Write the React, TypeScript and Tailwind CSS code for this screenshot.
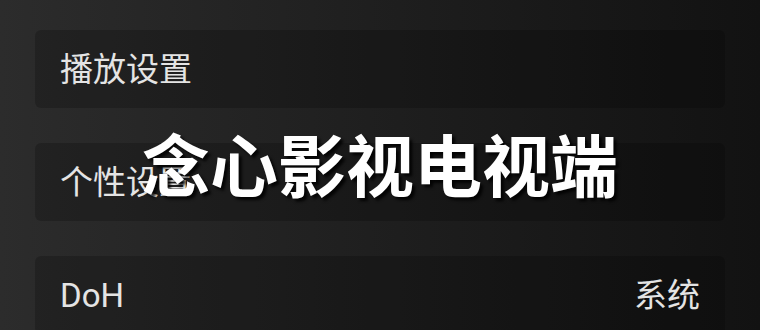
const rows = [
  { label: "播放设置", value: "" },
  { label: "个性设置", value: "" },
  { label: "DoH", value: "系统" },
];

export default function App() {
  return (
    <div
      className="relative h-[330px] w-[760px] overflow-hidden bg-gradient-to-r from-[#2c2c2c] to-[#121212] text-[#e4e4e4]"
      style={{ fontFamily: 'Roboto, "Noto Sans CJK SC", sans-serif' }}
    >
      <div className="flex flex-col gap-[35px] px-[35px] pt-[30px]">
        {rows.map((row) => (
          <div
            key={row.label}
            className="flex h-[78px] shrink-0 items-center justify-between rounded-[6px] bg-black/20 px-[25px] text-[33px] leading-none"
          >
            <span>{row.label}</span>
            {row.value && <span>{row.value}</span>}
          </div>
        ))}
      </div>

      <div className="absolute inset-0 flex items-center justify-center pt-[8px]">
        <h1
          className="text-[68px] font-bold leading-none text-white"
          style={{ textShadow: "3px 3px 3px rgba(0,0,0,0.85)" }}
        >
          念心影视电视端
        </h1>
      </div>
    </div>
  );
}
